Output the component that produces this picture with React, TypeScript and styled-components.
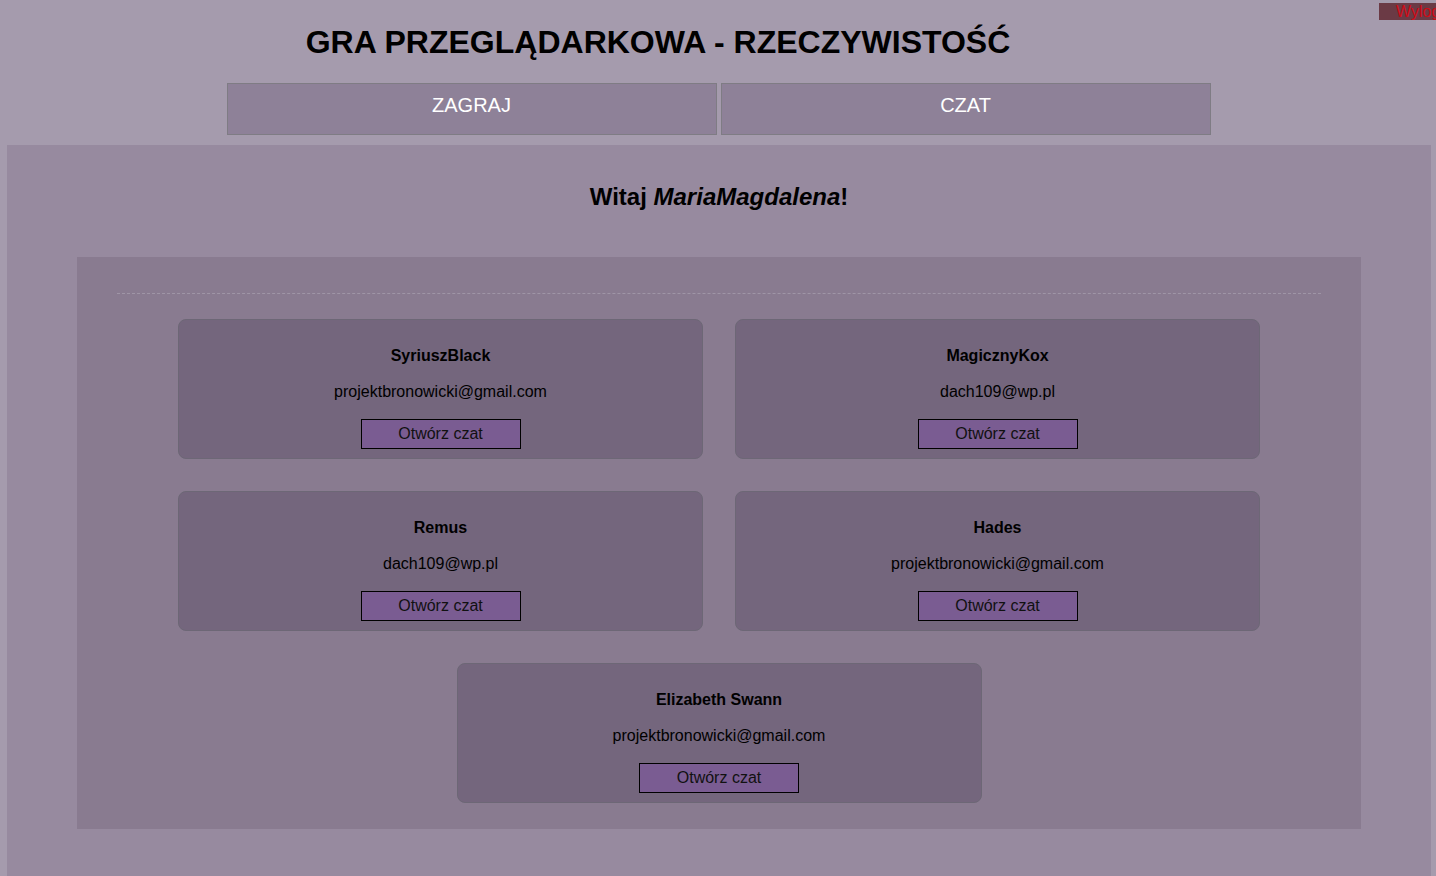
import React from "react";
import styled, { createGlobalStyle } from "styled-components";

const GlobalStyle = createGlobalStyle`
  html, body {
    margin: 0;
    padding: 0;
    background-color: #a59bad;
    font-family: "Liberation Sans", Arial, sans-serif;
    overflow: hidden;
  }
`;

const Page = styled.div`
  position: relative;
  min-height: 876px;
`;

const LogoutButton = styled.button`
  position: absolute;
  top: 3px;
  left: 1379px;
  height: 17px;
  width: 80px;
  padding: 0 0 0 17px;
  border: 0;
  text-align: left;
  background-color: #6b3a45;
  color: #d10a16;
  font-family: "Liberation Sans", Arial, sans-serif;
  font-size: 16px;
  line-height: 17px;
  overflow: hidden;
  white-space: nowrap;
`;

const Header = styled.header`
  padding: 24px 120px 0 0;
  text-align: center;
`;

const Title = styled.h1`
  margin: 0;
  font-size: 32px;
  font-weight: bold;
  color: #000;
`;

const Nav = styled.nav`
  display: flex;
  justify-content: center;
  gap: 4px;
  margin: 22px 0 0 0;
  padding-left: 1px;
`;

const NavButton = styled.button`
  width: 490px;
  height: 52px;
  border: 1px solid #7f7c84;
  background-color: #8e8198;
  color: #fff;
  font-family: "Liberation Sans", Arial, sans-serif;
  font-size: 20px;
  padding: 0 0 8px 0;
`;

const Main = styled.main`
  margin: 10px 5px 0 7px;
  padding: 37px 70px 60px;
  background-color: #978a9f;
`;

const Greeting = styled.h2`
  margin: 0 0 45px;
  text-align: center;
  font-size: 24px;
  font-weight: bold;
  line-height: 30px;
  color: #000;
`;

const UsersPanel = styled.section`
  background-color: #897b90;
  padding: 36px 40px 26px;
`;

const Divider = styled.hr`
  margin: 0 0 25px;
  border: 0;
  border-top: 1px dashed #9f95a6;
`;

const CardGrid = styled.div`
  display: flex;
  flex-wrap: wrap;
  justify-content: center;
  gap: 32px;
  max-width: 1082px;
  margin: 0 auto;
`;

const Card = styled.div`
  box-sizing: border-box;
  width: 525px;
  height: 140px;
  padding-top: 27px;
  background-color: #74667d;
  border: 1px solid #6d6776;
  border-radius: 8px;
  display: flex;
  flex-direction: column;
  align-items: center;
`;

const UserName = styled.div`
  font-size: 16px;
  font-weight: bold;
  line-height: 18px;
  color: #000;
`;

const UserEmail = styled.div`
  margin-top: 18px;
  font-size: 16px;
  line-height: 18px;
  color: #000;
`;

const ChatButton = styled.button`
  margin-top: 18px;
  width: 160px;
  height: 30px;
  border: 1px solid #000;
  background-color: #7a5c92;
  color: #111;
  font-family: "Liberation Sans", Arial, sans-serif;
  font-size: 16px;
  padding: 0;
`;

const users = [
  { name: "SyriuszBlack", email: "projektbronowicki@gmail.com" },
  { name: "MagicznyKox", email: "dach109@wp.pl" },
  { name: "Remus", email: "dach109@wp.pl" },
  { name: "Hades", email: "projektbronowicki@gmail.com" },
  { name: "Elizabeth Swann", email: "projektbronowicki@gmail.com" },
];

const App: React.FC = () => {
  return (
    <Page>
      <GlobalStyle />
      <LogoutButton>Wyloguj</LogoutButton>
      <Header>
        <Title>GRA PRZEGLĄDARKOWA - RZECZYWISTOŚĆ</Title>
      </Header>
      <Nav>
        <NavButton>ZAGRAJ</NavButton>
        <NavButton>CZAT</NavButton>
      </Nav>
      <Main>
        <Greeting>
          Witaj <i>MariaMagdalena</i>!
        </Greeting>
        <UsersPanel>
          <Divider />
          <CardGrid>
            {users.map((user) => (
              <Card key={user.name}>
                <UserName>{user.name}</UserName>
                <UserEmail>{user.email}</UserEmail>
                <ChatButton>Otwórz czat</ChatButton>
              </Card>
            ))}
          </CardGrid>
        </UsersPanel>
      </Main>
    </Page>
  );
};

export default App;
